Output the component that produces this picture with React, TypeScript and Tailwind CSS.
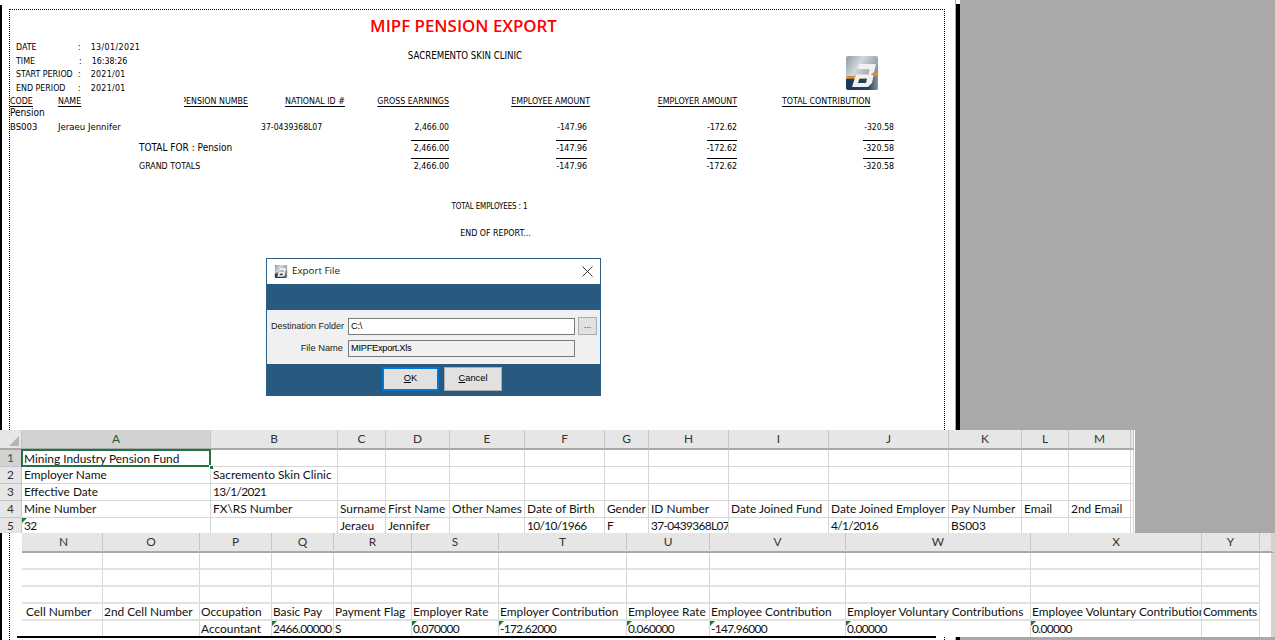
import React from "react";

const rpt = "font-['DejaVu_Sans_Condensed','DejaVu_Sans',sans-serif]";
const rowGrid = "grid grid-cols-[48px_126px_64px_97px_104px_141px_147px_157px] grid-rows-[minmax(0,1fr)] items-center whitespace-nowrap text-[8.8px] leading-[14px] text-black";
const ruleGrid = "grid grid-cols-[401px_38px_107px_31px_120px_30px_126px_31px] items-end";

function Logo({ className }: { className: string }) {
  return (
    <svg viewBox="0 0 32 34" className={className}>
      <defs>
        <linearGradient id="lg1" x1="0" y1="0" x2="1" y2="0.6">
          <stop offset="0" stopColor="#8f9aa3" />
          <stop offset="0.4" stopColor="#d4d8dc" />
          <stop offset="1" stopColor="#7c8790" />
        </linearGradient>
        <linearGradient id="lg2" x1="0" y1="0" x2="1" y2="0">
          <stop offset="0" stopColor="#1b3a57" />
          <stop offset="0.7" stopColor="#23405a" />
          <stop offset="1" stopColor="#8c96a0" />
        </linearGradient>
      </defs>
      <rect width="32" height="34" rx="2" fill="url(#lg1)" />
      <path d="M0 21 C10 19 22 21 32 16 V32 a2 2 0 0 1 -2 2 H2 a2 2 0 0 1 -2 -2 Z" fill="url(#lg2)" />
      <path d="M0 21 C10 19 22 21 32 16 V19 C22 24 10 22 0 23 Z" fill="#ee8a22" />
      <path
        fillRule="evenodd"
        d="M13 8 H30 L28 16 L25 18.5 L27.5 20 L26 27 L22 31 H6 L10 18.5 H22.5 L23.5 13 H12 Z M13.5 22.5 L12 27 H20 L21 22.5 Z"
        fill="#eef0f2"
      />
    </svg>
  );
}

function Meta({ label, colon, value, spaced }: { label: string; colon: string; value: string; spaced?: string }) {
  return (
    <div className="flex h-[13.5px] items-center whitespace-nowrap pl-[6px] text-[8.8px] leading-[13px] text-black">
      <span className="w-[62px]">{label}</span>
      <span className={colon}>:</span>
      <span className={`ml-[10px] ${spaced ?? ""}`}>{value}</span>
    </div>
  );
}

function AmountRow({ label, amounts, h }: { label: React.ReactNode; amounts: string[]; h: string }) {
  return (
    <div className={`${rowGrid} ${h}`}>
      <span className="col-span-3 pl-[129px]">{label}</span>
      <span />
      <span className="text-right">{amounts[0]}</span>
      <span className="pr-[3px] text-right">{amounts[1]}</span>
      <span className="text-right">{amounts[2]}</span>
      <span className="text-right">{amounts[3]}</span>
    </div>
  );
}

function Rules({ h }: { h: string }) {
  return (
    <div className={`${ruleGrid} ${h}`}>
      <span /><span className="h-px bg-black" /><span /><span className="h-px bg-black" /><span /><span className="h-px bg-black" /><span /><span className="h-px bg-black" />
    </div>
  );
}

function Report() {
  const head = "underline underline-offset-[2px]";
  const amounts = ["2,466.00", "-147.96", "-172.62", "-320.58"];
  return (
    <div className={`${rpt} ml-[7px] mt-[9px] flex w-[936px] flex-1 flex-col border-l border-r border-t border-dotted border-black`}>
      <div className="flex h-[31px] w-[907px] items-center justify-center font-['Open_Sans',sans-serif] text-[16.9px] font-semibold text-[#ff0000]">
        MIPF PENSION EXPORT
      </div>
      <div className="grid h-[53px] grid-cols-[340px_230px_1fr]">
        <div>
          <Meta label="DATE" colon="ml-0" value="13/01/2021" spaced="tracking-[0.4px]" />
          <Meta label="TIME" colon="ml-[1px]" value="16:38:26" />
          <Meta label="START PERIOD" colon="ml-0" value="2021/01" spaced="tracking-[0.3px]" />
          <Meta label="END PERIOD" colon="ml-0" value="2021/01" spaced="tracking-[0.3px]" />
        </div>
        <div className="whitespace-nowrap pt-[9px] text-center text-[9.6px] leading-[12px] text-black">SACREMENTO SKIN CLINIC</div>
        <div className="pl-[266px] pt-[15px]">
          <Logo className="h-[34px] w-[32px]" />
        </div>
      </div>
      <div className={`${rowGrid} h-[14px]`}>
        <span className={head}>CODE</span>
        <span className={head}>NAME</span>
        <span className="flex justify-end overflow-hidden"><span className={head}>PENSION NUMBE</span></span>
        <span className={`${head} pl-[37px]`}>NATIONAL ID #</span>
        <span className={`${head} text-right`}>GROSS EARNINGS</span>
        <span className={`${head} text-right`}>EMPLOYEE AMOUNT</span>
        <span className={`${head} text-right`}>EMPLOYER AMOUNT</span>
        <span className={`${head} pl-[45px]`}>TOTAL CONTRIBUTION</span>
      </div>
      <div className={`${rowGrid} h-[10px]`}>
        <span className="col-span-2 text-[10px]">Pension</span>
      </div>
      <div className={`${rowGrid} h-[18px]`}>
        <span className="text-[9.5px]">BS003</span>
        <span className="col-span-2 text-[9.5px]">Jeraeu Jennifer</span>
        <span className="pl-[13px] text-[8.6px]">37-0439368L07</span>
        <span className="text-[8.6px] text-right">2,466.00</span>
        <span className="pr-[3px] text-[8.6px] text-right">-147.96</span>
        <span className="text-[8.6px] text-right">-172.62</span>
        <span className="text-[8.6px] text-right">-320.58</span>
      </div>
      <Rules h="h-[5px]" />
      <AmountRow h="h-[14px]" label={<span className="text-[10px]">TOTAL FOR : Pension</span>} amounts={amounts} />
      <Rules h="h-[4px]" />
      <AmountRow h="h-[14px]" label="GRAND TOTALS" amounts={amounts} />
      <div className="mt-[27px] w-[959px] text-center text-[8px] leading-[14px] tracking-[-0.15px] text-black">TOTAL EMPLOYEES : 1</div>
      <div className="mt-[12px] w-[971px] text-center text-[8.8px] leading-[14px] text-black">END OF REPORT...</div>
    </div>
  );
}

function ExportDialog() {
  const lbl = "font-['Liberation_Sans',sans-serif] text-[9.3px] text-[#1a1a1a]";
  return (
    <div className="absolute left-[266px] top-[258px] flex h-[138px] w-[335px] flex-col border border-[#2b5f85] bg-white">
      <div className="flex h-[25px] items-center px-[7px]">
        <Logo className="h-[13px] w-[14px]" />
        <span className="ml-[4px] flex-1 font-['Open_Sans',sans-serif] text-[9.8px] text-[#222]">Export File</span>
        <svg viewBox="0 0 11 11" className="h-[11px] w-[11px]" fill="none" stroke="#222" strokeWidth="0.9">
          <path d="M0.5 0.5 10.5 10.5 M10.5 0.5 0.5 10.5" />
        </svg>
      </div>
      <div className="h-[26px] bg-[#285a7f]" />
      <div className={`flex h-[54px] flex-col gap-[5px] bg-[#f0f0f0] pt-[8px] ${lbl}`}>
        <div className="flex h-[17px] items-center">
          <span className="w-[81px] whitespace-nowrap pr-[4px] text-right text-[9px]">Destination Folder</span>
          <div className="flex h-[17px] w-[227px] items-center border border-[#7a7a7a] bg-white pl-[2px] tracking-[-0.3px] text-black">C:\</div>
          <div className="-mt-px ml-[3px] flex h-[18px] w-[19px] items-center justify-center border border-[#adadad] bg-[#e1e1e1] text-[#333]">...</div>
        </div>
        <div className="flex h-[17px] items-center">
          <span className="w-[81px] whitespace-nowrap pr-[5px] text-right">File Name</span>
          <div className="flex h-[17px] w-[227px] items-center border border-[#7a7a7a] bg-[#f0f0f0] pl-[2px] tracking-[-0.3px] text-black">MIPFExport.Xls</div>
        </div>
      </div>
      <div className={`flex flex-1 items-start gap-[5px] bg-[#285a7f] pl-[115px] pt-[3px] ${lbl}`}>
        <div className="flex h-[24px] w-[57px] items-center justify-center border-2 border-[#0078d7] bg-[#e1e1e1] text-black"><span className="underline">O</span>K</div>
        <div className="flex h-[24px] w-[58px] items-center justify-center border border-[#adadad] bg-[#e1e1e1] text-black"><span className="underline">C</span>ancel</div>
      </div>
    </div>
  );
}

const corner = "before:absolute before:left-0 before:top-0 before:border-l-[5px] before:border-b-[5px] before:border-l-[#1e7b34] before:border-b-transparent before:content-['']";
const sheetFont = "font-['Lato',sans-serif] text-[11.9px] text-[#111]";
const colBase = "flex items-center justify-center border-r border-b-2 border-r-[#c6c6c6] border-b-[#a8a8a8]";
const colHead = `${colBase} bg-[#e6e6e6] text-[#333]`;
const colHeadSel = `${colBase} bg-[#d2d2d2] text-[#1f5c3a]`;
const rowBase = "flex items-center justify-center border-r border-b border-[#c6c6c6]";
const rowHead = `${rowBase} bg-[#e6e6e6] text-[#333]`;
const rowHeadSel = `${rowBase} bg-[#d2d2d2] text-[#1f5c3a]`;

function Cell({ t, c, flag, pad }: { t?: string; c?: string; flag?: boolean; pad?: string }) {
  const numeric = !!t && /^[-\d./L]+$/.test(t);
  return (
    <div className={`relative overflow-hidden whitespace-nowrap ${c ?? "border-r border-b border-[#d6d6d6]"} ${pad ?? "pl-[2px]"} leading-[16px] ${numeric ? "tracking-[-0.65px]" : ""} ${flag ? corner : ""}`}>
      {t}
    </div>
  );
}

function SheetOne() {
  const cols = ["B", "C", "D", "E", "F", "G", "H", "I", "J", "K", "L", "M"];
  const row = (n: number, a: string, rest: Record<number, string>, sel = false, flag = false) => (
    <React.Fragment key={n}>
      <div className={sel ? rowHeadSel : rowHead}>{n}</div>
      {sel ? (
        <div className="relative z-10 -ml-px -mt-px overflow-hidden whitespace-nowrap border-2 border-[#217346] pl-[1px] leading-[15px]">{a}</div>
      ) : (
        <Cell t={a} flag={flag} />
      )}
      {Array.from({ length: 13 }, (_, i) => (
        <Cell key={i} t={rest[i]} />
      ))}
    </React.Fragment>
  );
  return (
    <div className={`absolute left-0 top-[430px] grid h-[103px] w-[1135px] grid-cols-[22px_189px_127px_48px_64px_75px_80px_44px_80px_100px_120px_73px_47px_62px_3px] grid-rows-[20px_17px_17px_17px_17px_17px] overflow-hidden bg-white ${sheetFont}`}>
      <div className="relative border-b-2 border-r border-b-[#a8a8a8] border-r-[#c6c6c6] bg-[#e6e6e6]">
        <svg viewBox="0 0 10 10" className="absolute bottom-[2px] right-[2px] h-[10px] w-[10px]"><path d="M10 0V10H0Z" fill="#b4b4b4" /></svg>
      </div>
      <div className={colHeadSel}>A</div>
      {cols.map((c) => (
        <div key={c} className={colHead}>{c}</div>
      ))}
      <div className={colHead} />
      {row(1, "Mining Industry Pension Fund", {}, true)}
      {row(2, "Employer Name", { 0: "Sacremento Skin Clinic" })}
      {row(3, "Effective Date", { 0: "13/1/2021" })}
      {row(4, "Mine Number", { 0: "FX\\RS Number", 1: "Surname", 2: "First Name", 3: "Other Names", 4: "Date of Birth", 5: "Gender", 6: "ID Number", 7: "Date Joined Fund", 8: "Date Joined Employer", 9: "Pay Number", 10: "Email", 11: "2nd Email", 12: "Cell Number" })}
      {row(5, "32", { 1: "Jeraeu", 2: "Jennifer", 4: "10/10/1966", 5: "F", 6: "37-0439368L07", 8: "4/1/2016", 9: "BS003" }, false, true)}
      <div className="absolute left-[209px] top-[35px] z-20 h-[5px] w-[5px] border border-white bg-[#217346]" />
    </div>
  );
}

function SheetTwo() {
  const cols = ["N", "O", "P", "Q", "R", "S", "T", "U", "V", "W", "X", "Y"];
  const heads = ["Cell Number", "2nd Cell Number", "Occupation", "Basic Pay", "Payment Flag", "Employer Rate", "Employer Contribution", "Employee Rate", "Employee Contribution", "Employer Voluntary Contributions", "Employee Voluntary Contributions"];
  const vals: (string | undefined)[] = [undefined, undefined, "Accountant", "2466.00000", "S", "0.070000", "-172.62000", "0.060000", "-147.96000", "0.00000", "0.00000", undefined];
  const flagged = new Set([3, 5, 6, 7, 8, 9, 10]);
  const line = "border-r border-b-2 border-r-[#d6d6d6] border-b-[#e2e2e2]";
  const lead = "border-b-2 border-b-[#e2e2e2]";
  const tail = "border-r-[4px] border-r-[#d2d2d2]";
  const blank = (k: number) => (
    <React.Fragment key={k}>
      <div className={lead} />
      {cols.map((c) => <Cell key={c} c={line} />)}
      <div className={tail} />
    </React.Fragment>
  );
  return (
    <div className={`absolute left-[22px] top-[533px] grid h-[104px] w-[1253px] grid-cols-[3px_78px_97px_72px_62px_78px_87px_128px_83px_136px_185px_171px_58px_1fr] grid-rows-[20px_17px_17px_17px_17px_17px] overflow-hidden bg-white ${sheetFont}`}>
      <div className="border-b-2 border-b-[#a8a8a8] bg-[#e6e6e6]" />
      {cols.map((c) => <div key={c} className={colHead}>{c}</div>)}
      <div className="border-b-2 border-b-[#a8a8a8] border-r-[4px] border-r-[#d2d2d2] bg-[#e6e6e6]" />
      {[0, 1, 2].map(blank)}
      <div className={lead} />
      {heads.map((h) => <Cell key={h} t={h} c={line} pad="pl-[1px]" />)}
      <div className={`${line} overflow-hidden whitespace-nowrap pl-[1px] leading-[16px] tracking-[-0.3px]`}>Comments</div>
      <div className={tail} />
      <div />
      {vals.map((v, i) => <Cell key={i} t={v} c="border-r border-r-[#d6d6d6]" flag={flagged.has(i)} pad="pl-[1px]" />)}
      <div className={tail} />
    </div>
  );
}

export default function App() {
  return (
    <div className="relative flex h-[640px] w-[1275px] overflow-hidden bg-white">
      <div className="mt-[5px] w-[2px] bg-black" />
      <Report />
      <div className="ml-[10px] w-px bg-[#a9a9a9]" />
      <div className="mt-[4px] w-[4px] bg-black" />
      <div className="flex-1 bg-[#a9a9a9]" />
      <ExportDialog />
      <SheetOne />
      <SheetTwo />
      <div className="absolute left-[17px] top-[636px] h-[2px] w-[919px] bg-black" />
    </div>
  );
}
